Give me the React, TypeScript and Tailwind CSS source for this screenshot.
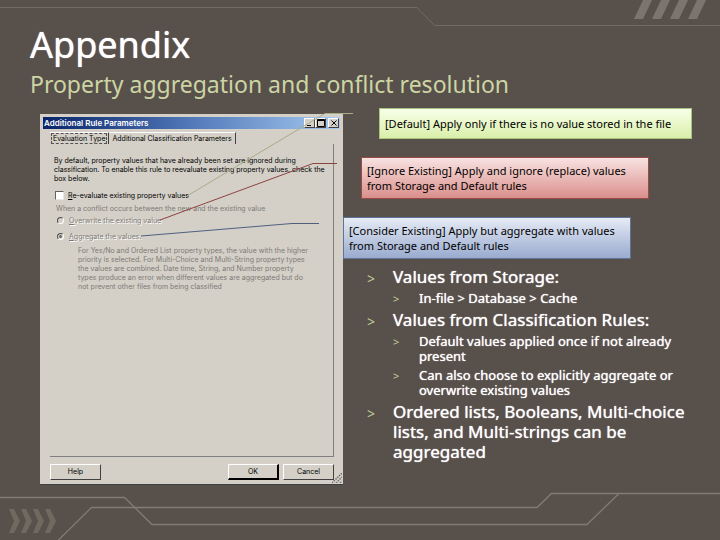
import { useState } from 'react';
import type { ReactNode } from 'react';
import clsx from 'clsx';

interface ICallout {
  text: string;
  className: string;
}

interface IBullet {
  text: string;
  children?: string[];
}

const callouts: ICallout[] = [
  {
    text: '[Default] Apply only if there is no value stored in the file',
    className: 'ml-9 w-[313px] h-[31px] border-[#a9c47f] from-[#f8ffe9] to-[#d9efa9]',
  },
  {
    text: '[Ignore Existing] Apply and ignore (replace) values from Storage and Default rules',
    className: 'ml-[18px] w-72 h-[42px] border-[#9c4a47] from-[#f7e3e2] to-[#d98f8c]',
  },
  {
    text: '[Consider Existing] Apply but aggregate with values from Storage and Default rules',
    className: 'w-72 h-[42px] border-[#5f7396] from-[#e6ebf5] to-[#9aabcf]',
  },
];

const bullets: IBullet[] = [
  { text: 'Values from Storage:', children: ['In-file > Database > Cache'] },
  {
    text: 'Values from Classification Rules:',
    children: [
      'Default values applied once if not already present',
      'Can also choose to explicitly aggregate or overwrite existing values',
    ],
  },
  { text: 'Ordered lists, Booleans, Multi-choice lists, and Multi-strings can be aggregated' },
];

// Decorative lines behind the slide content
const Backdrop = () => (
  <>
    <svg viewBox="0 0 720 40" className="absolute inset-x-0 top-0 w-full" fill="none" aria-hidden="true">
      <path d="M0 7.500H417L434.500 25.500H720" stroke="#736a64" />
      <path d="M643 0h9l-9 19h-9zM661 0h9l-9 19h-9zM679 0h9l-9 19h-9zM697 0h9l-9 19h-9z" fill="#7d746e" />
    </svg>
    <svg viewBox="0 0 720 60" className="absolute inset-x-0 bottom-0 w-full" fill="none" aria-hidden="true">
      <g stroke="#847a75" strokeWidth="1.300">
        <path d="M0 17.500H124.500L152 44.500H587L619 13.500" />
        <path d="M58 60.500L91.500 27.500H537L551.500 13.500H720" />
      </g>
      <path
        d="M9 29h5l6 12-6 12h-5l5-12zM21 29h5l6 12-6 12h-5l5-12zM33 29h5l6 12-6 12h-5l5-12zM45 29h5l6 12-6 12h-5l5-12z"
        fill="#71685f"
      />
    </svg>
  </>
);

// Lines from the dialog options to the callouts
const Connectors = () => (
  <svg width="353" height="160" viewBox="0 0 353 160" className="absolute left-0 top-0 pointer-events-none" fill="none" aria-hidden="true">
    <path d="M353 5.500H325L187 88" stroke="#a5ad86" />
    <path d="M337 55.500H313L160 112" stroke="#8d4441" />
    <path d="M319 115.500H292L141 128" stroke="#4f607f" />
  </svg>
);

const WindowButton = ({ label, children }: { label: string; children: ReactNode }) => (
  <button
    type="button"
    aria-label={label}
    className="w-[11px] h-[10px] bg-[#d4d0c8] border border-t-white border-l-white border-r-[#404040] border-b-[#404040] flex items-center justify-center"
  >
    <svg width="8" height="8" viewBox="0 0 8 8" fill="none" stroke="#000">
      {children}
    </svg>
  </button>
);

const DialogButton = ({ label, primary }: { label: string; primary?: boolean }) => (
  <button
    type="button"
    className={clsx(
      'w-[51px] h-4 border border-t-white border-l-white leading-3',
      primary ? 'border-r-2 border-b-2 border-r-black border-b-black' : 'border-r-[#404040] border-b-[#404040]'
    )}
  >
    {label}
  </button>
);

const RuleDialog = () => {
  const [tab, setTab] = useState('Evaluation Type');
  const [reevaluate, setReevaluate] = useState(false);

  return (
    <section
      aria-label="Additional Rule Parameters"
      className="relative w-[303px] h-[371px] mt-[6px] shrink-0 p-[3px] flex flex-col bg-[#d4d0c8] border-b border-[#404040] font-['Inter',sans-serif] text-[7px] leading-[9px] text-black"
    >
      <div className="h-3 px-px flex items-center bg-linear-to-r from-[#0a246a] via-[#5379b9] to-[#a6caf0]">
        <h2 className="flex-1 font-semibold text-[8px] text-white">Additional Rule Parameters</h2>
        <WindowButton label="Minimize">
          <path d="M1 6.500h4" />
        </WindowButton>
        <WindowButton label="Maximize">
          <path d="M.5 1.500h7M.5 .5h7v7h-7z" />
        </WindowButton>
        <div className="w-[2px]" />
        <WindowButton label="Close">
          <path d="M1.500 1.500l5 5M6.500 1.500l-5 5" />
        </WindowButton>
      </div>

      {/* Tabs */}
      <div role="tablist" className="flex mt-[3px] ml-[7px] h-3">
        {['Evaluation Type', 'Additional Classification Parameters'].map((name) => (
          <button
            key={name}
            type="button"
            role="tab"
            aria-selected={tab === name}
            onClick={() => setTab(name)}
            className="px-[2px] flex items-center border-t border-r border-t-white border-r-[#404040]"
          >
            <span className={clsx('px-px', tab === name && 'outline outline-dashed outline-black/60')}>{name}</span>
          </button>
        ))}
      </div>

      <div className="flex-1 ml-[7px] mr-[6px] pl-1 pt-3 border-r border-b border-[#808080]">
        <p className="w-[274px]">
          By default, property values that have already been set are ignored during
          <br />
          classification. To enable this rule to reevaluate existing property values, check the
          <br />
          box below.
        </p>
        <label className="flex items-center gap-1 mt-2 ml-px">
          <input
            type="checkbox"
            checked={reevaluate}
            onChange={(e) => setReevaluate(e.target.checked)}
            className="appearance-none size-[9px] bg-white checked:bg-black border border-t-[#606060] border-l-[#606060] border-r-[#e8e6e0] border-b-[#e8e6e0]"
          />
          <span>
            <u>R</u>e-evaluate existing property values
          </span>
        </label>
        <fieldset disabled className="mt-1 text-[#7d7a75]">
          <legend className="ml-[2px]">When a conflict occurs between the new and the existing value</legend>
          <label className="flex items-center gap-[5px] mt-[3px] ml-[3px]">
            <input type="radio" name="conflict" className="appearance-none size-[7px] rounded-full border border-t-[#505050] border-l-[#505050] border-r-white border-b-white" />
            <span className="[text-shadow:1px_1px_#fff]">
              <u>O</u>verwrite the existing value
            </span>
          </label>
          <label className="flex items-center gap-[5px] mt-[7px] ml-[3px]">
            <input
              type="radio"
              name="conflict"
              defaultChecked
              className="appearance-none size-[7px] rounded-full border border-t-[#505050] border-l-[#505050] border-r-white border-b-white bg-[radial-gradient(#707070_35%,transparent_45%)]"
            />
            <span className="[text-shadow:1px_1px_#fff]">
              <u>A</u>ggregate the values.
            </span>
          </label>
          <p className="mt-[5px] ml-6">
            For Yes/No and Ordered List property types, the value with the higher
            <br />
            priority is selected. For Multi-Choice and Multi-String property types
            <br />
            the values are combined. Date time, String, and Number property
            <br />
            types produce an error when different values are aggregated but do
            <br />
            not prevent other files from being classified
          </p>
        </fieldset>
      </div>

      <div className="flex gap-1 mt-[7px] mb-px ml-[7px] mr-[6px]">
        <DialogButton label="Help" />
        <div className="flex-1" />
        <DialogButton label="OK" primary />
        <DialogButton label="Cancel" />
      </div>
      <svg width="10" height="10" viewBox="0 0 10 10" className="absolute right-px bottom-px" stroke="#707070" aria-hidden="true">
        <path d="M0 10L10 0M4 10l6-6M8 10l2-2" strokeDasharray="1.500 1" strokeWidth="1.500" />
      </svg>
    </section>
  );
};

export default function App() {
  return (
    <div className="relative min-h-screen overflow-hidden bg-[#58504a] font-['Noto_Sans',sans-serif]">
      <Backdrop />

      {/* Header */}
      <header className="relative pl-[30px] pt-5">
        <h1 className="text-4xl leading-[50px] text-white [text-shadow:0_0_1px_#fff]">Appendix</h1>
        <p className="text-[23px] leading-7 text-[#cdd5a5]">Property aggregation and conflict resolution</p>
      </header>

      <main className="relative flex pl-10 mt-[10px]">
        <RuleDialog />

        <div className="flex-1">
          <div className="flex flex-col gap-[18px]">
            {callouts.map((callout) => (
              <p
                key={callout.text}
                className={clsx('flex items-center px-[5px] border bg-linear-to-b text-[11px] leading-[15px] text-black', callout.className)}
              >
                {callout.text}
              </p>
            ))}
          </div>

          <ul className="flex flex-col gap-1 mt-2 ml-6 w-80 text-white [text-shadow:0_0_1px_#fff] text-[17px] leading-5">
            {bullets.map((bullet) => (
              <li key={bullet.text} className="flex">
                <span className="w-[26px] shrink-0 text-sm leading-6 text-[#c3cc9b] [text-shadow:none]">&gt;</span>
                <div>
                  {bullet.text}
                  {bullet.children && (
                    <ul className="flex flex-col gap-1 mt-1 text-[13px] leading-[15px]">
                      {bullet.children.map((child) => (
                        <li key={child} className="flex">
                          <span className="w-[26px] shrink-0 text-[11px] leading-[15px] text-[#c3cc9b] [text-shadow:none]">&gt;</span>
                          <span>{child}</span>
                        </li>
                      ))}
                    </ul>
                  )}
                </div>
              </li>
            ))}
          </ul>
        </div>

        <Connectors />
      </main>
    </div>
  );
}
